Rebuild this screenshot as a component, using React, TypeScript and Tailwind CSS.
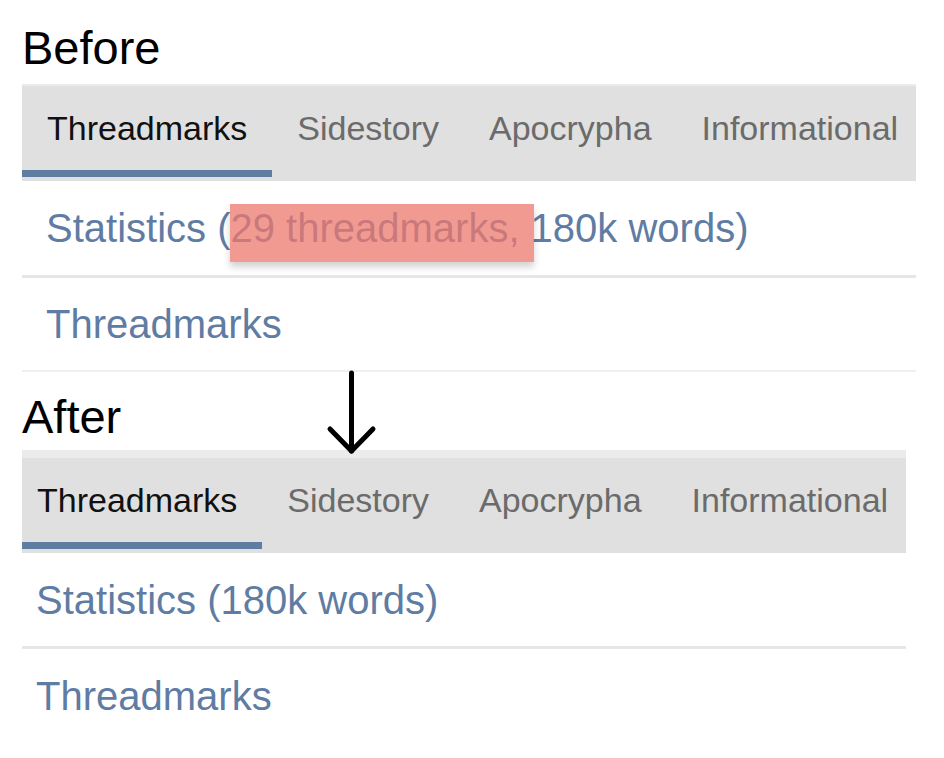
const TABS = ["Threadmarks", "Sidestory", "Apocrypha", "Informational"];

const FONT = { fontFamily: '"Liberation Sans", Arial, Helvetica, sans-serif' };

function TabBar({ strip }: { strip: string }) {
  return (
    <div className={`w-[894px] bg-[#e0e0e0] pb-[4px] ${strip} border-[#ebebeb]`}>
      <div className="flex overflow-hidden whitespace-nowrap">
        {TABS.map((tab, i) => (
          <div key={tab} className="flex shrink-0 flex-col">
            <div
              className={`flex h-[84px] items-center px-[25px] text-[34px] leading-none ${
                i === 0 ? "text-[#111111]" : "text-[#6b6b6b]"
              }`}
            >
              {tab}
            </div>
            <div className={`h-[7px] ${i === 0 ? "bg-[#5f7ca3]" : "bg-transparent"}`} />
          </div>
        ))}
      </div>
    </div>
  );
}

function Row({
  children,
  className,
}: {
  children: React.ReactNode;
  className: string;
}) {
  return (
    <div
      className={`relative flex w-[894px] items-center pl-[24px] text-[40px] leading-none text-[#5f7ca3] ${className}`}
    >
      {children}
    </div>
  );
}

export default function App() {
  return (
    <div className="relative h-[758px] w-[944px] overflow-hidden bg-white" style={FONT}>
      {/* Before */}
      <div className="pl-[22px]">
        <h1 className="mt-[24px] mb-[13px] text-[47px] leading-none text-black">Before</h1>
        <TabBar strip="border-t-[2px]" />
        <Row className="h-[97px] border-b-[3px] border-[#e6e6e6]">
          <span>Statistics (29 threadmarks, 180k words)</span>
          {/* highlight over the removed part */}
          <div className="absolute top-[23px] left-[208px] h-[58px] w-[304px] bg-[rgba(236,120,110,0.75)] shadow-[0_5px_7px_rgba(0,0,0,0.18)]" />
        </Row>
        <Row className="h-[94px] border-b-[2px] border-[#efefef]">Threadmarks</Row>
      </div>

      {/* After: same panel nudged 10px left, clipped at the margin */}
      <div className="ml-[22px] w-[884px] overflow-hidden">
        <h1 className="mt-[21px] mb-[10px] text-[47px] leading-none text-black">After</h1>
        <div className="-ml-[10px]">
          <TabBar strip="border-t-[8px]" />
          <Row className="h-[96px] border-b-[3px] border-[#e6e6e6]">Statistics (180k words)</Row>
          <Row className="h-[93px]">Threadmarks</Row>
        </div>
      </div>

      {/* arrow */}
      <svg
        className="absolute top-[370px] left-[326px]"
        width="52"
        height="86"
        viewBox="0 0 52 86"
        fill="none"
        stroke="#000"
        strokeWidth="5"
        strokeLinecap="round"
        strokeLinejoin="round"
      >
        <path d="M25.5 3v78" />
        <path d="M4 59l21.5 22L47 59" />
      </svg>
    </div>
  );
}
